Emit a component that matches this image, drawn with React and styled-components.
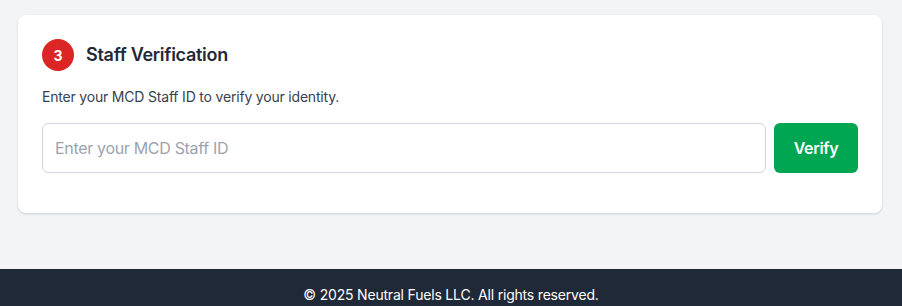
import React from 'react';
import styled, { createGlobalStyle } from 'styled-components';

const GlobalStyle = createGlobalStyle`
  * { box-sizing: border-box; }
  body {
    margin: 0;
    background: #f3f4f6;
    font-family: Inter, "Noto Sans", "Liberation Sans", sans-serif;
    letter-spacing: -0.012em;
    -webkit-font-smoothing: antialiased;
  }
`;

const Page = styled.div`
  min-height: 306px;
  display: flex;
  flex-direction: column;
`;

const Main = styled.main`
  padding: 15px 20px 56px 18px;
`;

const Card = styled.section`
  background: #ffffff;
  border-radius: 8px;
  box-shadow: 0 1px 3px rgba(0, 0, 0, 0.1), 0 1px 2px rgba(0, 0, 0, 0.06);
  padding: 24px 24px 40px;
`;

const Header = styled.div`
  display: flex;
  align-items: center;
  gap: 12px;
  margin-bottom: 16px;
`;

const StepBadge = styled.div`
  width: 32px;
  height: 32px;
  border-radius: 50%;
  background: #dc2626;
  color: #ffffff;
  font-weight: 700;
  font-size: 14px;
  display: flex;
  align-items: center;
  justify-content: center;
`;

const Title = styled.h2`
  margin: 0;
  font-size: 18px;
  line-height: 28px;
  font-weight: 600;
  letter-spacing: -0.015em;
  color: #1f2937;
`;

const Description = styled.p`
  margin: 0 0 16px;
  font-size: 14px;
  line-height: 20px;
  color: #374151;
`;

const Row = styled.div`
  display: flex;
  gap: 8px;
`;

const Input = styled.input`
  flex: 1;
  height: 50px;
  padding: 0 12px;
  border: 1px solid #d1d5db;
  border-radius: 6px;
  font-family: inherit;
  font-size: 16px;
  letter-spacing: -0.02em;
  color: #111827;
  outline: none;
  &::placeholder {
    color: #9ca3af;
  }
`;

const Button = styled.button`
  width: 84px;
  height: 50px;
  padding: 0;
  border: none;
  border-radius: 6px;
  background: #00a651;
  color: #ffffff;
  font-family: inherit;
  font-size: 16px;
  font-weight: 600;
  letter-spacing: -0.02em;
  cursor: pointer;
`;

const Footer = styled.footer`
  background: #1f2937;
  color: #ffffff;
  text-align: center;
  padding: 16px;
  font-size: 14px;
  line-height: 20px;
`;

export default function App() {
  return (
    <Page>
      <GlobalStyle />
      <Main>
        <Card>
          <Header>
            <StepBadge>3</StepBadge>
            <Title>Staff Verification</Title>
          </Header>
          <Description>Enter your MCD Staff ID to verify your identity.</Description>
          <Row>
            <Input placeholder="Enter your MCD Staff ID" />
            <Button>Verify</Button>
          </Row>
        </Card>
      </Main>
      <Footer>© 2025 Neutral Fuels LLC. All rights reserved.</Footer>
    </Page>
  );
}
